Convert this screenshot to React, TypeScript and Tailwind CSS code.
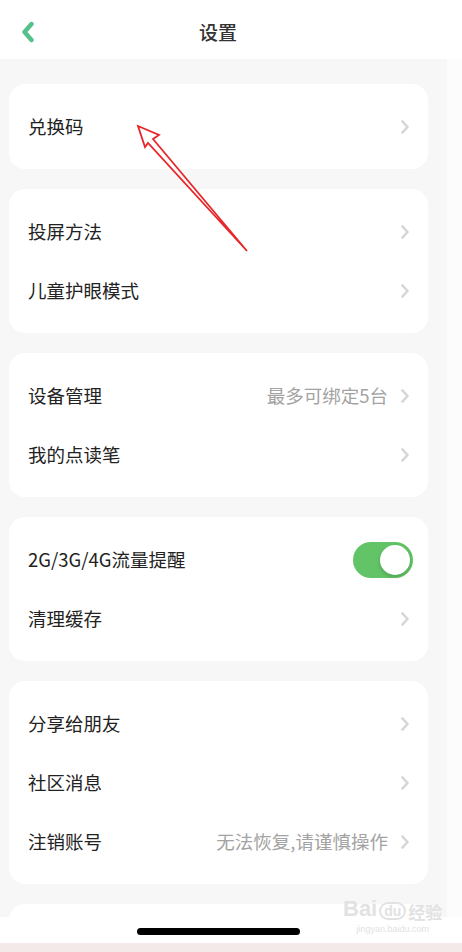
import React from 'react';

type Item = { label: string; hint?: string; toggle?: boolean };

const groups: Item[][] = [
    [{ label: '兑换码' }],
    [{ label: '投屏方法' }, { label: '儿童护眼模式' }],
    [{ label: '设备管理', hint: '最多可绑定5台' }, { label: '我的点读笔' }],
    [{ label: '2G/3G/4G流量提醒', toggle: true }, { label: '清理缓存' }],
    [{ label: '分享给朋友' }, { label: '社区消息' }, { label: '注销账号', hint: '无法恢复,请谨慎操作' }]
];

const Chevron = () => (
    <svg width="10" height="14" viewBox="0 0 10 14" className="shrink-0">
        <path d="M2.5 1.5 L7.5 7 L2.5 12.5" fill="none" stroke="#d6d6d6" strokeWidth="2.6" strokeLinecap="round" strokeLinejoin="round" />
    </svg>
);

const Toggle = () => (
    <div className="w-[60px] h-[36px] rounded-full bg-[#62c466] p-[3px] flex justify-end mr-[-3px]">
        <div className="w-[30px] h-[30px] rounded-full bg-white shadow-[0_2px_4px_rgba(0,0,0,0.18)]" />
    </div>
);

const Row = ({ label, hint, toggle }: Item) => (
    <div className="h-[59px] flex items-center pl-[19px] pr-[18px]">
        <span className="flex-1 text-[18.5px] text-[#222]">{label}</span>
        {toggle ? (
            <Toggle />
        ) : (
            <div className="flex items-center gap-[12px]">
                {hint && <span className="text-[18.5px] text-[#a3a3a3]">{hint}</span>}
                <Chevron />
            </div>
        )}
    </div>
);

export default function App() {
    return (
        <div className="w-[462px] h-[952px] overflow-hidden flex flex-col bg-white relative" style={{ fontFamily: '"Noto Sans CJK SC", "Noto Sans", sans-serif' }}>
            {/* header */}
            <div className="h-[59px] shrink-0 flex items-center justify-center relative bg-white pr-[26px]">
                <svg width="14" height="22" viewBox="0 0 14 22" className="absolute left-[21px] top-[21px]">
                    <path d="M10.5 3 L3.5 11 L10.5 19" fill="none" stroke="#56c08a" strokeWidth="4.4" strokeLinecap="round" strokeLinejoin="round" />
                </svg>
                <span className="text-[19px] font-medium text-[#333] mt-[5px]">设置</span>
            </div>

            {/* list */}
            <div className="h-[858px] shrink-0 flex overflow-hidden">
                <div className="w-[447px] bg-[#f7f7f7] pl-[9px] pr-[19px] pt-[25px] flex flex-col gap-[20px]">
                    {groups.map((g, i) => (
                        <div key={i} className="bg-white rounded-[16px] py-[13px] shrink-0">
                            {g.map((item, j) => <Row key={j} {...item} />)}
                        </div>
                    ))}
                    <div className="bg-white rounded-[16px] h-[80px] shrink-0" />
                </div>
                <div className="flex-1 bg-[#fcfcfc]" />
            </div>

            {/* home indicator */}
            <div className="h-[26px] shrink-0 bg-white flex justify-center pt-[11px] pr-[25px]">
                <div className="w-[163px] h-[7px] rounded-full bg-black" />
            </div>
            <div className="h-[9px] shrink-0 bg-[#f3e9e9]" />

            {/* watermark */}
            <div className="absolute left-[343px] top-[898px] flex flex-col items-center text-[#e2e2e2] leading-none">
                <div className="flex items-end">
                    <span className="text-[22px] font-bold" style={{ fontFamily: '"Liberation Sans", sans-serif' }}>Bai</span>
                    <span className="border-2 border-[#e2e2e2] rounded-full px-[3px] text-[14px] font-bold mx-[2px]" style={{ fontFamily: '"Liberation Sans", sans-serif' }}>du</span>
                    <span className="text-[17px] font-bold">经验</span>
                </div>
                <span className="text-[9px] mt-[5px]" style={{ fontFamily: '"Liberation Sans", sans-serif' }}>jingyan.baidu.com</span>
            </div>

            {/* red annotation arrow */}
            <svg width="462" height="952" className="absolute left-0 top-0 pointer-events-none">
                <polygon points="138,126 159,135 153,139 247,251 148,143 145,147" fill="none" stroke="#e8262a" strokeWidth="1.8" strokeLinejoin="miter" />
            </svg>
        </div>
    );
}
